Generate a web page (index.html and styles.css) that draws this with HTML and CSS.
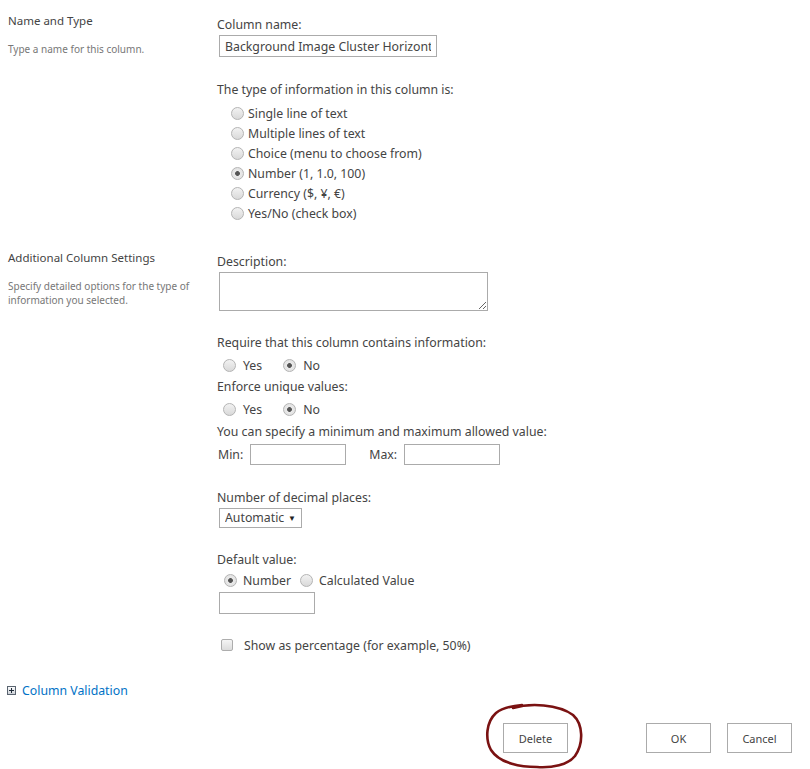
FILE: index.html
```html
<!DOCTYPE html>
<html lang="en">
<head>
    <meta charset="UTF-8">
    <meta name="viewport" content="width=device-width, initial-scale=1.0">
    <title>Change Column</title>
    <link rel="stylesheet" href="styles.css">
</head>
<body>

    <div class="section section-name">
        <div class="side">
            <h3>Name and Type</h3>
            <p>Type a name for this column.</p>
        </div>
        <div class="main">
            <label class="label" for="colName">Column name:</label>
            <input type="text" id="colName" class="text-wide" value="Background Image Cluster Horizontal Alignment">

            <div class="label gap-top">The type of information in this column is:</div>
            <div class="radio-list">
                <label class="opt"><input type="radio" name="type"> Single line of text</label>
                <label class="opt"><input type="radio" name="type"> Multiple lines of text</label>
                <label class="opt"><input type="radio" name="type"> Choice (menu to choose from)</label>
                <label class="opt"><input type="radio" name="type" checked> Number (1, 1.0, 100)</label>
                <label class="opt"><input type="radio" name="type"> Currency ($, ¥, €)</label>
                <label class="opt"><input type="radio" name="type"> Yes/No (check box)</label>
            </div>
        </div>
    </div>

    <div class="section section-settings">
        <div class="side">
            <h3>Additional Column Settings</h3>
            <p>Specify detailed options for the type of information you selected.</p>
        </div>
        <div class="main">
            <label class="label" for="desc">Description:</label>
            <textarea id="desc" class="desc-box"></textarea>

            <div class="label mt-22">Require that this column contains information:</div>
            <div class="inline-radios">
                <label><input type="radio" name="req"> Yes</label>
                <label><input type="radio" name="req" checked> No</label>
            </div>

            <div class="label mt-2">Enforce unique values:</div>
            <div class="inline-radios">
                <label><input type="radio" name="uniq"> Yes</label>
                <label><input type="radio" name="uniq" checked> No</label>
            </div>

            <div class="label mt-3">You can specify a minimum and maximum allowed value:</div>
            <div class="min-max">
                <label for="minVal">Min:</label>
                <input type="text" id="minVal" class="text-small">
                <label for="maxVal" class="max-label">Max:</label>
                <input type="text" id="maxVal" class="text-small">
            </div>

            <label class="label mt-23" for="decimals">Number of decimal places:</label>
            <div class="select-wrap">
                <select id="decimals">
                    <option>Automatic</option>
                    <option>0</option>
                    <option>1</option>
                    <option>2</option>
                    <option>3</option>
                    <option>4</option>
                    <option>5</option>
                </select>
            </div>

            <div class="label mt-22">Default value:</div>
            <div class="inline-radios default-radios">
                <label><input type="radio" name="def" checked> Number</label>
                <label><input type="radio" name="def"> Calculated Value</label>
            </div>
            <input type="text" class="text-small default-input">

            <label class="check-row"><input type="checkbox"> Show as percentage (for example, 50%)</label>
        </div>
    </div>

    <div class="validation">
        <svg class="plus-icon" width="9" height="9" viewBox="0 0 9 9">
            <defs>
                <linearGradient id="plusBg" x1="0" y1="0" x2="0" y2="1">
                    <stop offset="0" stop-color="#ffffff"/>
                    <stop offset="1" stop-color="#c8cdd4"/>
                </linearGradient>
            </defs>
            <rect x="0.5" y="0.5" width="8" height="8" fill="url(#plusBg)" stroke="#5a6470"/>
            <path d="M2 4.5h5M4.5 2v5" stroke="#1e2a38" stroke-width="1"/>
        </svg>
        <a href="#">Column Validation</a>
    </div>

    <div class="buttons">
        <div class="delete-wrap">
            <button type="button" class="btn">Delete</button>
            <!-- hand-drawn marker round the delete button -->
            <svg class="scribble" width="110" height="69" viewBox="0 0 110 69">
                <path d="M33 8 C50 3, 78 4, 93 15 C103 24, 104 43, 95 56 C88 65, 72 68, 57 67 C42 67, 20 64, 11 50 C5 39, 6 22, 16 13 C22 8, 30 6, 42 5"
                      fill="none" stroke="#7a1212" stroke-width="2.6" stroke-linecap="round"/>
            </svg>
        </div>
        <button type="button" class="btn">OK</button>
        <button type="button" class="btn">Cancel</button>
    </div>

</body>
</html>
```

FILE: styles.css
```css
* {
    margin: 0;
    padding: 0;
    box-sizing: border-box;
}

body {
    font-family: "Noto Sans", "Open Sans", sans-serif;
    font-size: 12.3px;
    color: #444;
    background: #fff;
    padding: 0 18px 30px 8px;
}

.section {
    display: grid;
    grid-template-columns: 209px 1fr;
}

.section-name {
    padding-top: 15px;
}

.section-settings {
    margin-top: 29px;
}

/* left column */
.side h3 {
    font-size: 11.5px;
    font-weight: normal;
    color: #444;
    line-height: 14px;
    margin-top: -1px;
}

.side p {
    font-size: 10px;
    color: #777;
    line-height: 14px;
    margin-top: 14px;
    width: 190px;
}

/* right column */
.label {
    display: block;
    line-height: 20px;
}

.gap-top { margin-top: 23px; }
.mt-2 { margin-top: 2px; }
.mt-3 { margin-top: 3px; }
.mt-22 { margin-top: 22px; }
.mt-23 { margin-top: 23px; }

input[type="text"],
textarea,
select {
    font-family: inherit;
    font-size: 12.3px;
    color: #444;
    border: 1px solid #ababab;
    background: #fff;
    outline: none;
}

.text-wide {
    display: block;
    width: 218px;
    height: 22px;
    margin-left: 2px;
    padding: 0 5px;
}

.radio-list {
    margin-top: 3px;
    padding-left: 14px;
}

.opt {
    display: flex;
    align-items: center;
    gap: 4px;
    height: 20px;
}

input[type="radio"] {
    appearance: none;
    width: 13px;
    height: 13px;
    border: 1px solid #b4b4b4;
    border-radius: 50%;
    background: linear-gradient(#f2f2f2, #d9d9d9);
    flex-shrink: 0;
}

input[type="radio"]:checked {
    background: radial-gradient(circle, #555 0, #555 2px, #e9e9e9 2.8px, #dedede 100%);
}

.desc-box {
    display: block;
    width: 269px;
    height: 39px;
    margin-left: 2px;
    resize: both;
}

.inline-radios {
    display: flex;
    align-items: center;
    height: 20px;
    margin-top: 2px;
    padding-left: 6px;
    gap: 21px;
}

.inline-radios label {
    display: flex;
    align-items: center;
    gap: 7px;
}

.default-radios {
    margin-top: 0;
    padding-left: 7px;
    gap: 9px;
}

.default-radios label {
    gap: 6px;
}

.min-max {
    display: flex;
    align-items: center;
    height: 22px;
    margin-top: 1px;
    padding-left: 1px;
}

.min-max label {
    margin-right: 7px;
}

.max-label {
    margin-left: 23px;
}

.text-small {
    width: 96px;
    height: 21px;
    padding: 0 4px;
}

.select-wrap {
    position: relative;
    width: 83px;
    margin-left: 2px;
}

.select-wrap select {
    appearance: none;
    display: block;
    width: 83px;
    height: 20px;
    padding: 0 0 0 5px;
    line-height: 18px;
}

.select-wrap::after {
    content: "\25BC";
    position: absolute;
    right: 6px;
    top: 4px;
    font-size: 8px;
    color: #222;
    pointer-events: none;
}

.default-input {
    display: block;
    height: 22px;
    margin-top: 2px;
    margin-left: 2px;
}

.check-row {
    display: flex;
    align-items: center;
    gap: 11px;
    height: 20px;
    margin-top: 21px;
    padding-left: 4px;
}

input[type="checkbox"] {
    appearance: none;
    width: 12px;
    height: 12px;
    border: 1px solid #adadad;
    border-radius: 2px;
    background: linear-gradient(#f5f5f5, #dcdcdc);
}

/* bottom */
.validation {
    display: flex;
    align-items: center;
    gap: 6px;
    height: 20px;
    margin-top: 25px;
}

.plus-icon {
    display: block;
    margin-left: -1px;
}

.validation a {
    color: #0072c6;
    text-decoration: none;
}

.buttons {
    display: flex;
    justify-content: flex-end;
    gap: 16px;
    margin-top: 23px;
}

.btn {
    width: 65px;
    height: 30px;
    font-family: inherit;
    font-size: 11px;
    color: #444;
    background: #fff;
    border: 1px solid #ababab;
    cursor: pointer;
}

.delete-wrap {
    position: relative;
    margin-right: 62px;
}

.delete-wrap .btn {
    display: block;
}

.scribble {
    position: absolute;
    left: -23px;
    top: -23px;
    pointer-events: none;
}
```
